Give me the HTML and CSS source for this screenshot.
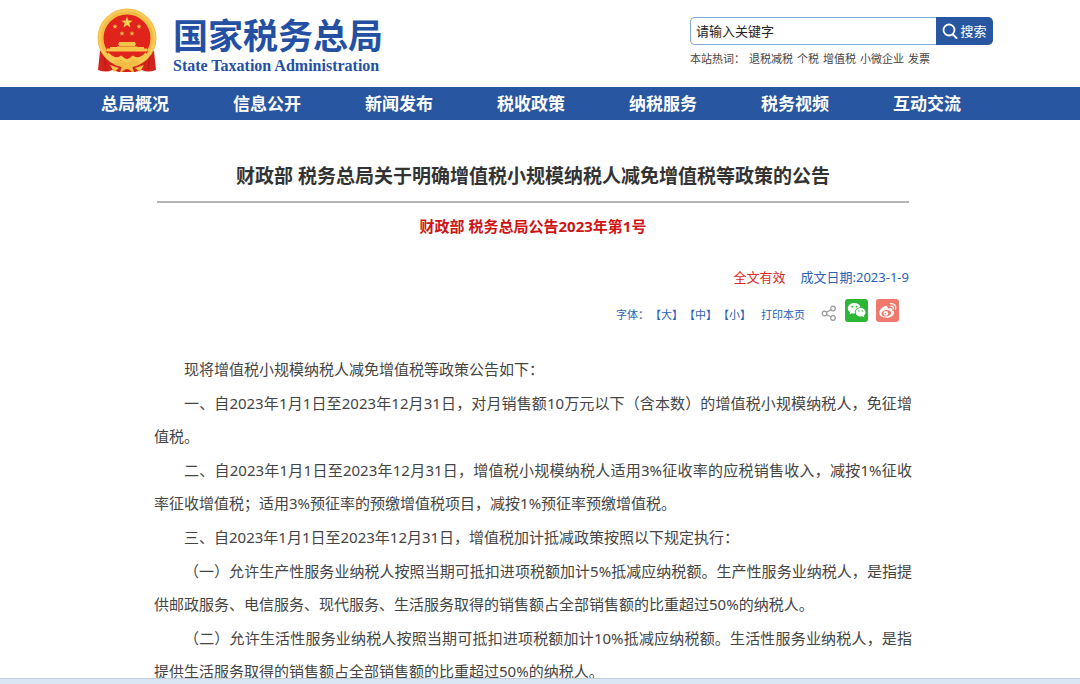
FILE: index.html
```html
<!DOCTYPE html>
<html lang="zh-CN">
<head>
  <meta charset="UTF-8">
  <title>国家税务总局</title>
  <link rel="stylesheet" href="styles.css">
</head>
<body>
<header class="header">
  <div class="container header-inner">
    <a class="logo" href="#">
      <svg class="emblem" viewBox="0 0 60 65" aria-hidden="true">
        <!-- 绶带 -->
        <path d="M3 43 L1 62 Q10 65 15 62 L22 64 L38 64 L45 62 Q50 65 59 62 L57 43 Z" fill="#d3231c"/>
        <path d="M7 46 L9 62 M53 46 L51 62" stroke="#b51a15" stroke-width="1" fill="none"/>
        <circle cx="30" cy="30" r="29.500" fill="#f3bd45"/>
        <circle cx="30" cy="30" r="27.500" fill="none" stroke="#f9cd5c" stroke-width="2"/>
        <circle cx="30" cy="30" r="23.500" fill="#e0231b"/>
        <path d="M30 8.500 l1.400 4.100 4.300 .1 -3.400 2.600 1.200 4.200 -3.500 -2.500 -3.500 2.500 1.200 -4.200 -3.400 -2.600 4.300 -.1z" fill="#f8cf50"/>
        <g fill="#f8b648">
          <path id="s" d="M18 16 l.7 1.500 1.700 .2 -1.200 1.200 .3 1.700 -1.500 -.8 -1.500 .8 .3 -1.700 -1.200 -1.200 1.700 -.2z"/>
          <use href="#s" x="24"/>
          <use href="#s" x="7" y="7"/>
          <use href="#s" x="17" y="7"/>
        </g>
        <!-- 城楼 -->
        <path d="M22 34 h16 l1 3 h-1 v2 h9 v5 H13 v-5 h9 v-2 h-1z" fill="#f6c34b"/>
        <path d="M20 38.500 h20" stroke="#e38a2e" stroke-width="1"/>
        <path d="M9 43 H51 Q48 51 41 52 Q36 48 30 52 Q24 48 19 52 Q12 51 9 43z" fill="#e0231b"/>
        <path d="M10 42 H50" stroke="#f6c34b" stroke-width="3"/>
        <path d="M10 46 Q18 54 24 50 Q30 56 36 50 Q42 54 50 46" fill="none" stroke="#f8c84f" stroke-width="4"/>
        <!-- 齿轮和结 -->
        <path d="M17 54 Q24 51 30 55 Q36 51 43 54 L41 57 L35 58 L37 64 H23 L25 58 L19 57z" fill="#f3bd45"/>
        <path d="M13 57 L22 60 L17 64z M47 57 L38 60 L43 64z" fill="#f6c34b"/>
        <path d="M25 64 Q30 58 35 64z" fill="#d3231c"/>
      </svg>
      <span class="logo-text">
        <span class="logo-cn">国家税务总局</span>
        <span class="logo-en">State Taxation Administration</span>
      </span>
    </a>
    <div class="search">
      <form class="search-form">
        <input class="search-input" type="text" value="请输入关键字" aria-label="请输入关键字">
        <button class="search-btn" type="button">
          <svg class="search-icon" viewBox="0 0 16 16" aria-hidden="true">
            <circle cx="7" cy="7" r="5.500" fill="none" stroke="#fff" stroke-width="1.800"/>
            <path d="M11 11.500 L14.500 15" stroke="#fff" stroke-width="2" stroke-linecap="round"/>
          </svg>搜索</button>
      </form>
      <div class="hot">
        <span>本站热词：</span>
        <a href="#">退税减税</a>
        <a href="#">个税</a>
        <a href="#">增值税</a>
        <a href="#">小微企业</a>
        <a href="#">发票</a>
      </div>
    </div>
  </div>
</header>

<nav class="nav">
  <ul class="container nav-list">
    <li><a href="#">总局概况</a></li>
    <li><a href="#">信息公开</a></li>
    <li><a href="#">新闻发布</a></li>
    <li><a href="#">税收政策</a></li>
    <li><a href="#">纳税服务</a></li>
    <li><a href="#">税务视频</a></li>
    <li><a href="#">互动交流</a></li>
  </ul>
</nav>

<main class="main">
  <article class="article">
    <h1 class="title">财政部 税务总局关于明确增值税小规模纳税人减免增值税等政策的公告</h1>
    <h2 class="doc-no">财政部 税务总局公告2023年第1号</h2>
    <div class="meta">
      <span class="valid">全文有效</span>
      <span>成文日期:2023-1-9</span>
    </div>
    <div class="tools">
      <div class="font-size">
        <span>字体：</span>
        <a href="#">【大】</a>
        <a href="#">【中】</a>
        <a href="#">【小】</a>
      </div>
      <a class="print" href="#">打印本页</a>
      <div class="share">
        <svg class="share-icon" viewBox="0 0 16 16" aria-hidden="true">
          <g fill="none" stroke="#999" stroke-width="1.200">
            <circle cx="3.500" cy="8.500" r="2.300"/>
            <circle cx="12" cy="3.500" r="2.300"/>
            <circle cx="12" cy="13" r="2.300"/>
            <path d="M5.500 7.300 L10 4.700 M5.600 9.500 L9.900 11.900"/>
          </g>
        </svg>
        <a class="share-btn wechat" href="#" aria-label="微信">
          <svg viewBox="0 0 23 23" aria-hidden="true">
            <path d="M9.300 4 C5.500 4 2.800 6.300 2.800 9.300 C2.800 11 3.700 12.400 5.100 13.400 L4.500 15.500 L6.900 14.200 Q8.500 14.700 10 14.500 C9.400 10.800 12.200 8.300 15.700 8.300 C15 5.700 12.500 4 9.300 4z" fill="#fff"/>
            <path d="M15.500 9 C12.600 9 10.700 11 10.700 13.300 C10.700 15.700 12.800 17.600 15.500 17.600 Q16.500 17.600 17.400 17.300 L19.300 18.400 L18.800 16.600 C20 15.800 20.600 14.600 20.600 13.300 C20.600 11 18.400 9 15.500 9z" fill="#fff"/>
            <g fill="#2db535">
              <circle cx="7.200" cy="7.700" r=".9"/>
              <circle cx="11.500" cy="7.700" r=".9"/>
              <circle cx="13.900" cy="12" r=".7"/>
              <circle cx="17.200" cy="12" r=".7"/>
            </g>
          </svg>
        </a>
        <a class="share-btn weibo" href="#" aria-label="微博">
          <svg viewBox="0 0 23 23" aria-hidden="true">
            <path d="M9.500 7 C6.500 7.500 3.300 11 3.300 14 C3.300 17 6.800 18.700 10.500 18.700 C15 18.700 18 16.200 18 13.700 C18 12.300 17 11.600 15.800 11.300 C16.400 9.500 15.500 8.200 11.600 9.600 C12 7.700 11.400 6.800 9.500 7z" fill="#fff"/>
            <ellipse cx="10.300" cy="14.200" rx="4.900" ry="3.200" transform="rotate(-8 10.300 14.200)" fill="#f0796e"/>
            <circle cx="9.800" cy="14.400" r="2.300" fill="#fff"/>
            <circle cx="9.300" cy="14.800" r=".8" fill="#f0796e"/>
            <path d="M14.500 4.700 C18 4 20.500 6.800 19.400 10.200 M15 7.300 C16.700 7 17.700 8.300 17.200 9.800" fill="none" stroke="#fff" stroke-width="1.300" stroke-linecap="round"/>
          </svg>
        </a>
      </div>
    </div>
    <div class="content">
      <p>现将增值税小规模纳税人减免增值税等政策公告如下：</p>
      <p>一、自2023年1月1日至2023年12月31日，对月销售额10万元以下（含本数）的增值税小规模纳税人，免征增值税。</p>
      <p>二、自2023年1月1日至2023年12月31日，增值税小规模纳税人适用3%征收率的应税销售收入，减按1%征收率征收增值税；适用3%预征率的预缴增值税项目，减按1%预征率预缴增值税。</p>
      <p>三、自2023年1月1日至2023年12月31日，增值税加计抵减政策按照以下规定执行：</p>
      <p>（一）允许生产性服务业纳税人按照当期可抵扣进项税额加计5%抵减应纳税额。生产性服务业纳税人，是指提供邮政服务、电信服务、现代服务、生活服务取得的销售额占全部销售额的比重超过50%的纳税人。</p>
      <p>（二）允许生活性服务业纳税人按照当期可抵扣进项税额加计10%抵减应纳税额。生活性服务业纳税人，是指提供生活服务取得的销售额占全部销售额的比重超过50%的纳税人。</p>
    </div>
  </article>
</main>
<div class="bottom-bar"></div>
</body>
</html>
```
FILE: styles.css
```css
* {
  box-sizing: border-box;
}

body {
  margin: 0;
  height: 100vh;
  overflow: hidden;
  background: #fff;
  color: #444;
  font: 15px/33px "Noto Sans", "Noto Sans CJK SC", sans-serif;
}

a {
  color: inherit;
  text-decoration: none;
}

.container {
  max-width: 924px;
  margin: 0 auto;
}

/* 右侧留出滚动条的宽度 */
.header,
.nav {
  padding-right: 18px;
}

.main {
  padding-right: 14px;
}

.header-inner {
  display: flex;
  justify-content: space-between;
  align-items: flex-start;
  height: 87px;
  padding-left: 28px;
}

.logo {
  display: flex;
  gap: 16px;
  padding-top: 8px;
}

.emblem {
  width: 60px;
  height: 65px;
}

.logo-text {
  display: flex;
  flex-direction: column;
  padding-top: 7px;
  color: #2450a4;
  font-weight: bold;
}

.logo-cn {
  font-size: 35px;
  line-height: 42px;
}

.logo-en {
  font: bold 16px/18px "Liberation Serif", serif;
}

.search {
  width: 303px;
  padding-top: 17px;
}

.search-form {
  display: flex;
  height: 28px;
}

.search-input {
  flex: 1;
  min-width: 0;
  padding: 0 5px;
  border: 1px solid #7fa9d6;
  border-right: 0;
  border-radius: 5px 0 0 5px;
  background: #fff;
  color: #222;
  font: 13px/20px "Noto Sans CJK SC", sans-serif;
}

.search-btn {
  display: flex;
  align-items: center;
  justify-content: center;
  gap: 2px;
  width: 57px;
  padding: 0;
  border: 0;
  border-radius: 0 5px 5px 0;
  background: #2856a0;
  color: #fff;
  font: 13px/20px "Noto Sans CJK SC", sans-serif;
}

.search-icon {
  width: 16px;
  height: 16px;
}

.hot {
  display: flex;
  gap: 4px;
  padding-top: 4px;
  font-size: 11px;
  line-height: 20px;
}

.nav {
  background: #2856a0;
}

.nav-list {
  display: flex;
  padding: 0;
  list-style: none;
}

.nav-list li {
  flex: 1;
  text-align: center;
  color: #fff;
  font-size: 17px;
  font-weight: bold;
}

.article {
  max-width: 752px;
  margin: 0 auto;
  padding-top: 40px;
}

.title {
  margin: 0;
  padding-bottom: 8px;
  border-bottom: 2px solid #b4b4b4;
  color: #333;
  font-size: 19px;
  text-align: center;
}

.doc-no {
  margin: 7px 0 0;
  color: #d01414;
  font-size: 15px;
  text-align: center;
}

.meta {
  display: flex;
  justify-content: flex-end;
  gap: 15px;
  padding-top: 18px;
  color: #2a62b4;
  font-size: 13px;
}

.valid {
  color: #dc2828;
}

.tools {
  display: flex;
  justify-content: flex-end;
  align-items: flex-end;
  height: 32px;
  padding-right: 10px;
  color: #2a62b4;
  font-size: 11px;
  line-height: 22px;
}

.font-size {
  display: flex;
  gap: 1px;
}

.print {
  margin-left: 10px;
}

.share {
  display: flex;
  align-items: center;
  gap: 8px;
  margin-left: 16px;
  padding-bottom: 4px;
}

.share-icon {
  width: 16px;
  height: 16px;
  margin-top: 4px;
}

.share-btn {
  width: 23px;
  height: 23px;
  border-radius: 3px;
}

.share-btn svg {
  display: block;
}

.wechat {
  background: #2db535;
}

.weibo {
  background: #f0796e;
}

/* 正文比标题线略宽，保证行尾的标点排得下 */
.content {
  margin: 0 -3px;
  padding-top: 27px;
  text-align: justify;
}

.content p {
  margin: 0 0 1px;
  text-indent: 2em;
}

/* 窗口底部的边条 */
.bottom-bar {
  position: fixed;
  right: 0;
  bottom: 0;
  left: 0;
  height: 6px;
  border-top: 1px solid #c3d0de;
  background: #dae6f3;
}
```
